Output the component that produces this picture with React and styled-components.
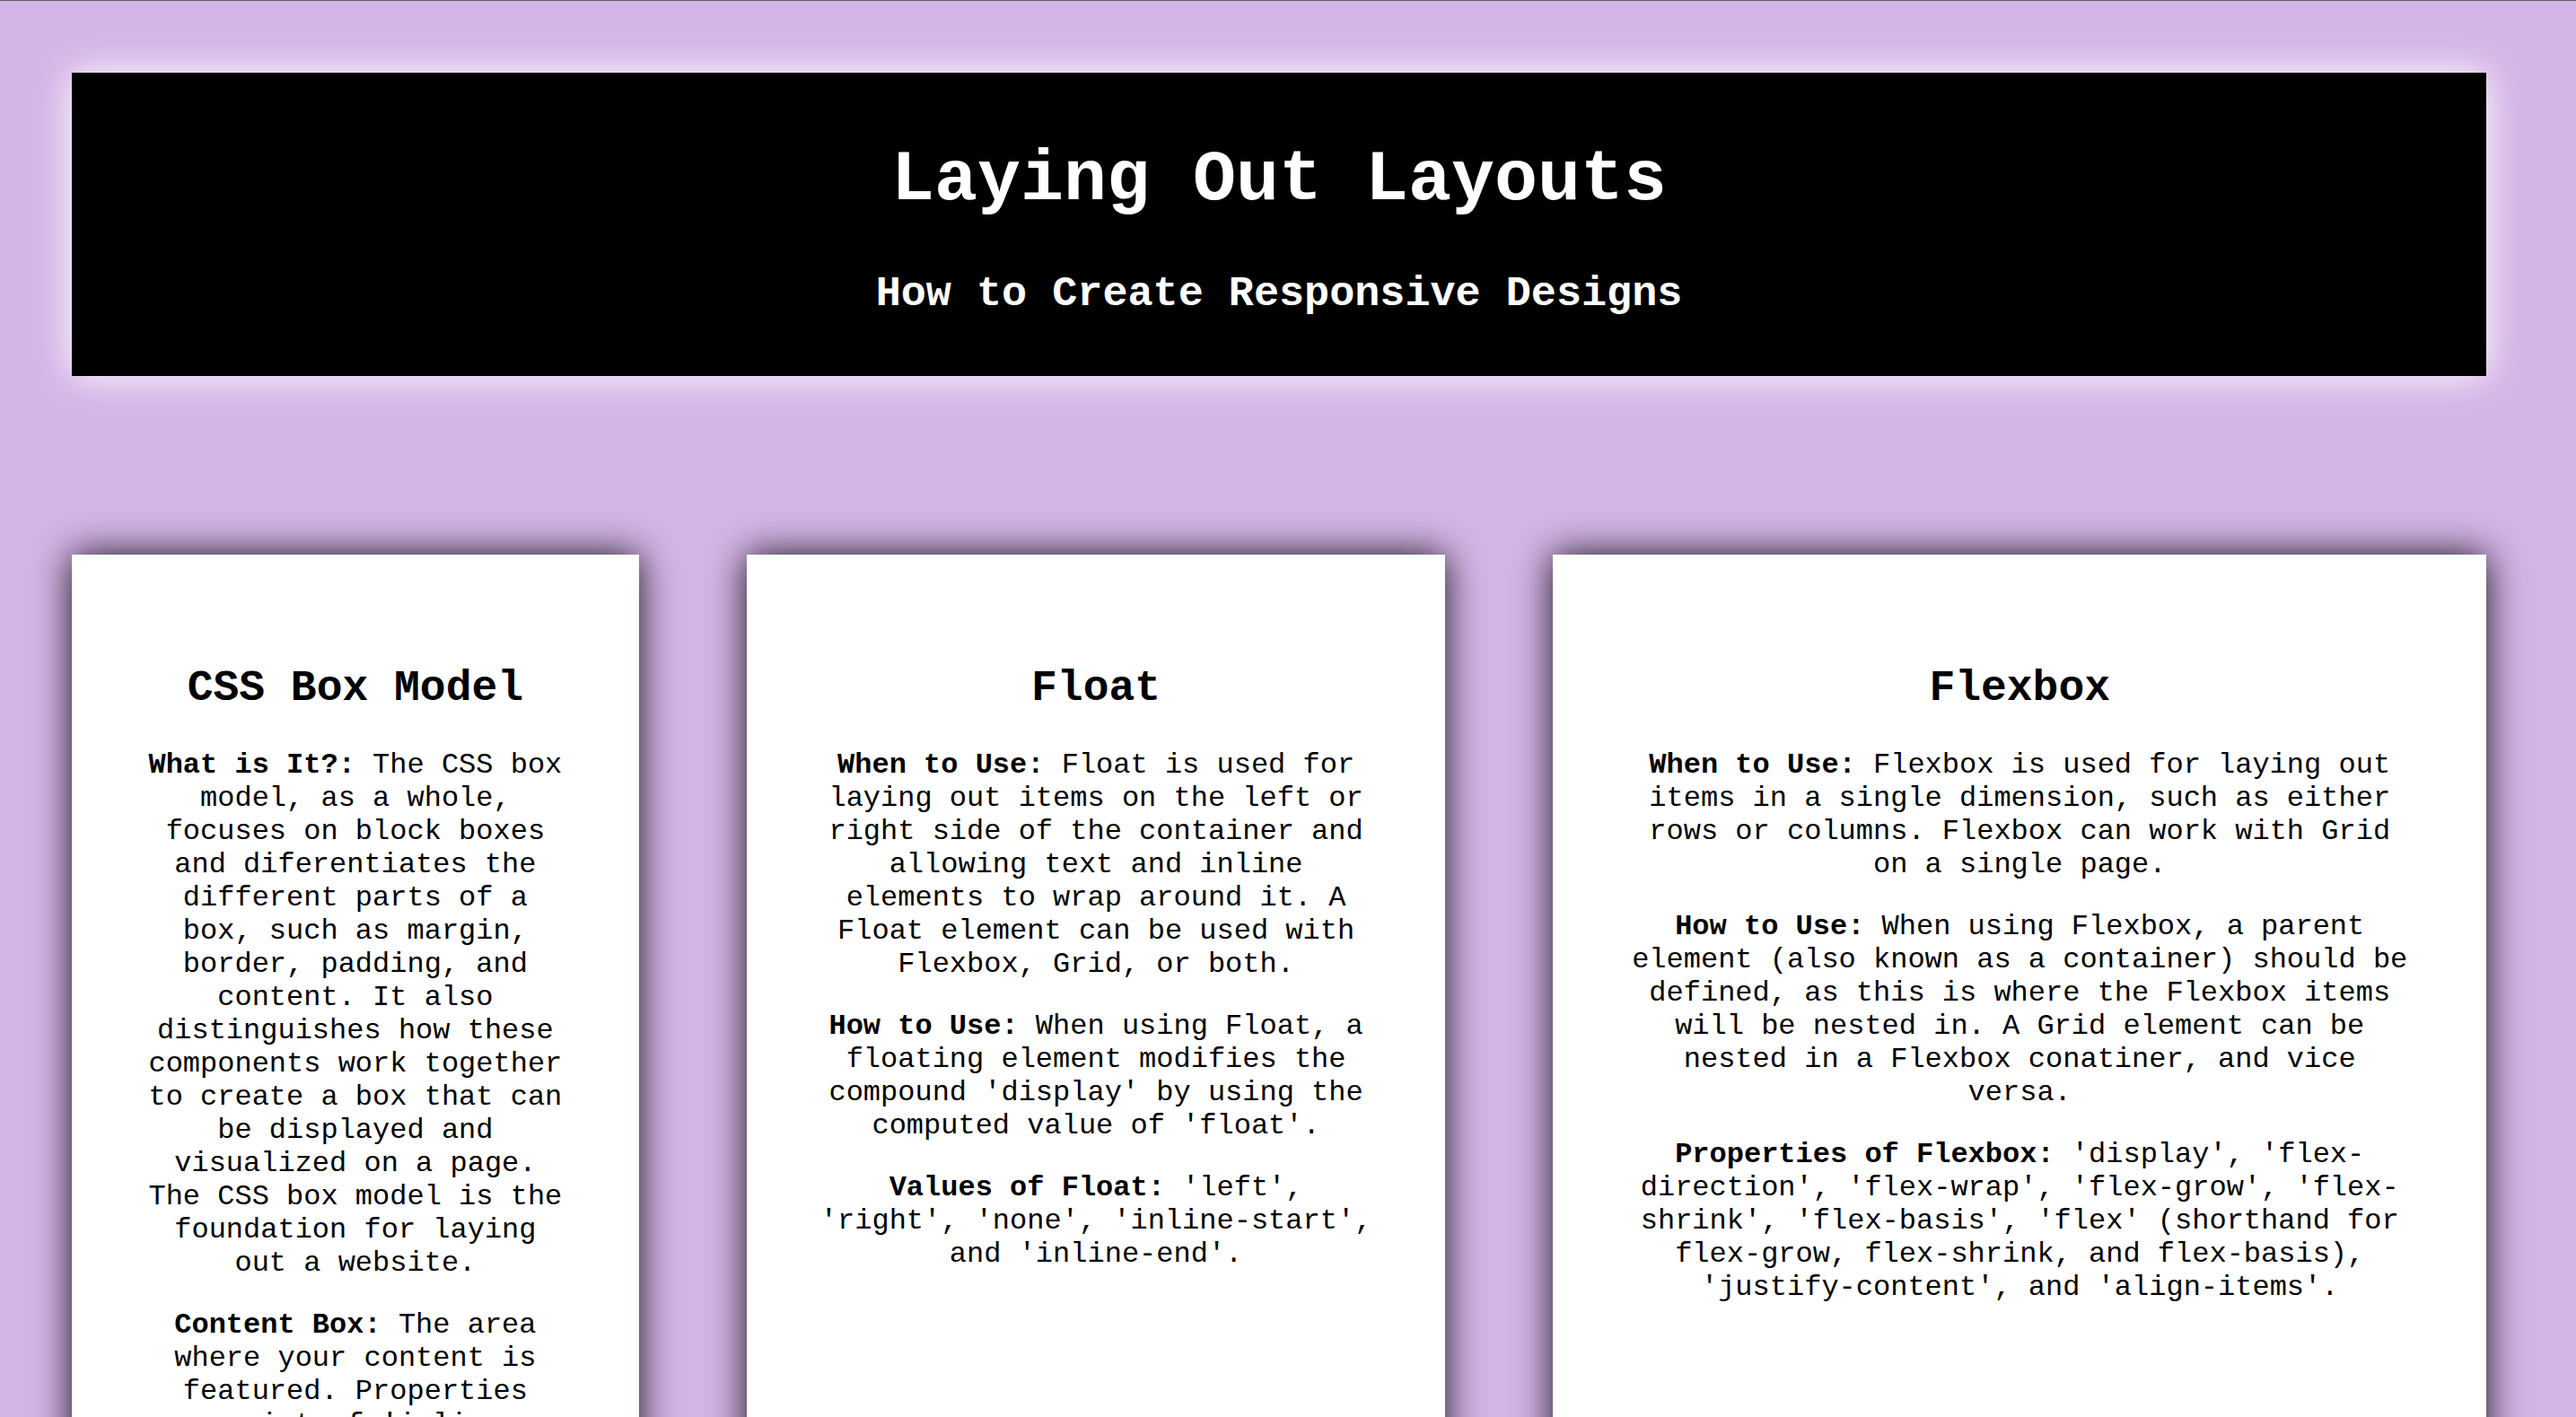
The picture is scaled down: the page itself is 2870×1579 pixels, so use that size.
import React from "react";
import styled, { createGlobalStyle } from "styled-components";

const GlobalStyle = createGlobalStyle`
  html, body {
    margin: 0;
    padding: 0;
    background: #d4b5e7;
  }
  html {
    border-top: 1px solid #5e5e5e;
    overflow-y: scroll;
  }
  ::-webkit-scrollbar {
    width: 20px;
  }
  ::-webkit-scrollbar-track {
    background: #fafafa;
    border-left: 1px solid #e6e6e6;
  }
  ::-webkit-scrollbar-thumb {
    background: #c1c1c1;
    border-radius: 8px;
    border: 3px solid #fafafa;
    border-left-width: 4px;
  }
  body {
    font-family: "Courier New", Courier, "Nimbus Mono PS", "Liberation Mono", monospace;
    color: #000;
  }
`;

const Page = styled.main`
  padding: 80px 0 120px 80px;
`;

const Column = styled.div`
  width: 2690px;
  display: flex;
  flex-direction: column;
`;

const Header = styled.header`
  background: #000;
  color: #fff;
  text-align: center;
  padding: 74px 0 65px;
  box-shadow: 0 0 40px #fff;
`;

const Title = styled.h1`
  margin: 0;
  font-size: 80px;
  font-weight: bold;
  line-height: normal;
`;

const Subtitle = styled.h2`
  margin: 55px 0 0;
  font-size: 46.8px;
  font-weight: bold;
  line-height: normal;
`;

const CardRow = styled.section`
  display: grid;
  grid-template-columns: ${(p) => p.$cols};
  column-gap: 120px;
  align-items: stretch;
  margin-top: ${(p) => p.$top}px;
`;

const Card = styled.article`
  background: #fff;
  padding: 122px 80px 90px;
  text-align: center;
  box-shadow: 0 0 40px rgba(0, 0, 0, 0.9);
`;

const CardTitle = styled.h2`
  margin: 0 0 40px;
  font-size: 48px;
  font-weight: bold;
  line-height: normal;
`;

const Para = styled.p`
  margin: 0 0 32px;
  font-size: 32px;
  line-height: normal;

  strong {
    font-weight: bold;
  }
`;

const rowOne = [
  {
    title: "CSS Box Model",
    paras: [
      ["What is It?:", " The CSS box model, as a whole, focuses on block boxes and diferentiates the different parts of a box, such as margin, border, padding, and content. It also distinguishes how these components work together to create a box that can be displayed and visualized on a page. The CSS box model is the foundation for laying out a website."],
      ["Content Box:", " The area where your content is featured. Properties consist of 'inline-size', 'block-size', 'width', and 'height'."],
      ["Padding Box:", " The space surrounding the content area, between the content and the border. Properties consist of 'padding-top', 'padding-right', 'padding-bottom', 'padding-left', and the shorthand 'padding'."],
      ["Border Box:", " The line that wraps the content and the padding. Properties consist of 'border-width', 'border-style', 'border-color', and the shorthand 'border'."],
      ["Margin Box:", " The outermost layer, which wraps the content, padding, and border, and creates space between the box and other elements. Properties consist of 'margin-top', 'margin-right', 'margin-bottom', 'margin-left', and the shorthand 'margin'."],
    ],
  },
  {
    title: "Float",
    paras: [
      ["When to Use:", " Float is used for laying out items on the left or right side of the container and allowing text and inline elements to wrap around it. A Float element can be used with Flexbox, Grid, or both."],
      ["How to Use:", " When using Float, a floating element modifies the compound 'display' by using the computed value of 'float'."],
      ["Values of Float:", " 'left', 'right', 'none', 'inline-start', and 'inline-end'."],
    ],
  },
  {
    title: "Flexbox",
    paras: [
      ["When to Use:", " Flexbox is used for laying out items in a single dimension, such as either rows or columns. Flexbox can work with Grid on a single page."],
      ["How to Use:", " When using Flexbox, a parent element (also known as a container) should be defined, as this is where the Flexbox items will be nested in. A Grid element can be nested in a Flexbox conatiner, and vice versa."],
      ["Properties of Flexbox:", " 'display', 'flex-direction', 'flex-wrap', 'flex-grow', 'flex-shrink', 'flex-basis', 'flex' (shorthand for flex-grow, flex-shrink, and flex-basis), 'justify-content', and 'align-items'."],
    ],
  },
];

const rowTwo = [
  {
    title: "Grid",
    paras: [
      ["When to Use:", " Grid is used for laying out items in two dimensions, both rows and columns at the same time. Grid can work with Flexbox on a single page."],
      ["How to Use:", " When using Grid, a parent element (also known as a grid container) should be defined with 'display: grid', and the grid items are placed inside of it along rows and columns."],
      ["Properties of Grid:", " 'grid-template-columns', 'grid-template-rows', 'grid-template-areas', 'gap', 'grid-column', 'grid-row', and 'grid-area'."],
    ],
  },
  {
    title: "Media Queries",
    paras: [
      ["When to Use:", " Media queries are used to apply styles depending on the size of the screen or device, which makes a layout responsive."],
      ["How to Use:", " A media query is written with '@media' followed by a condition, such as 'max-width' or 'min-width', and the styles that should apply when the condition is true."],
    ],
  },
  {
    title: "Responsive Design",
    paras: [
      ["What is It?:", " Responsive design is an approach to building pages that adapt to every screen size, from phones to large desktop monitors."],
      ["How to Use:", " Combine the box model, Float, Flexbox, Grid, and media queries, and use relative units such as '%', 'em', 'rem', 'vw', and 'vh' so that content can grow and shrink with the viewport."],
    ],
  },
];

function InfoCard({ title, paras }) {
  return (
    <Card>
      <CardTitle>{title}</CardTitle>
      {paras.map(([label, text], i) => (
        <Para key={i}>
          <strong>{label}</strong>
          {text}
        </Para>
      ))}
    </Card>
  );
}

export default function App() {
  return (
    <>
      <GlobalStyle />
      <Page>
        <Column>
          <Header>
            <Title>Laying Out Layouts</Title>
            <Subtitle>How to Create Responsive Designs</Subtitle>
          </Header>
          <CardRow $cols="632fr 779fr 1040fr" $top={199}>
            {rowOne.map((c) => (
              <InfoCard key={c.title} {...c} />
            ))}
          </CardRow>
          <CardRow $cols="632fr 779fr 1040fr" $top={160}>
            {rowTwo.map((c) => (
              <InfoCard key={c.title} {...c} />
            ))}
          </CardRow>
        </Column>
      </Page>
    </>
  );
}
